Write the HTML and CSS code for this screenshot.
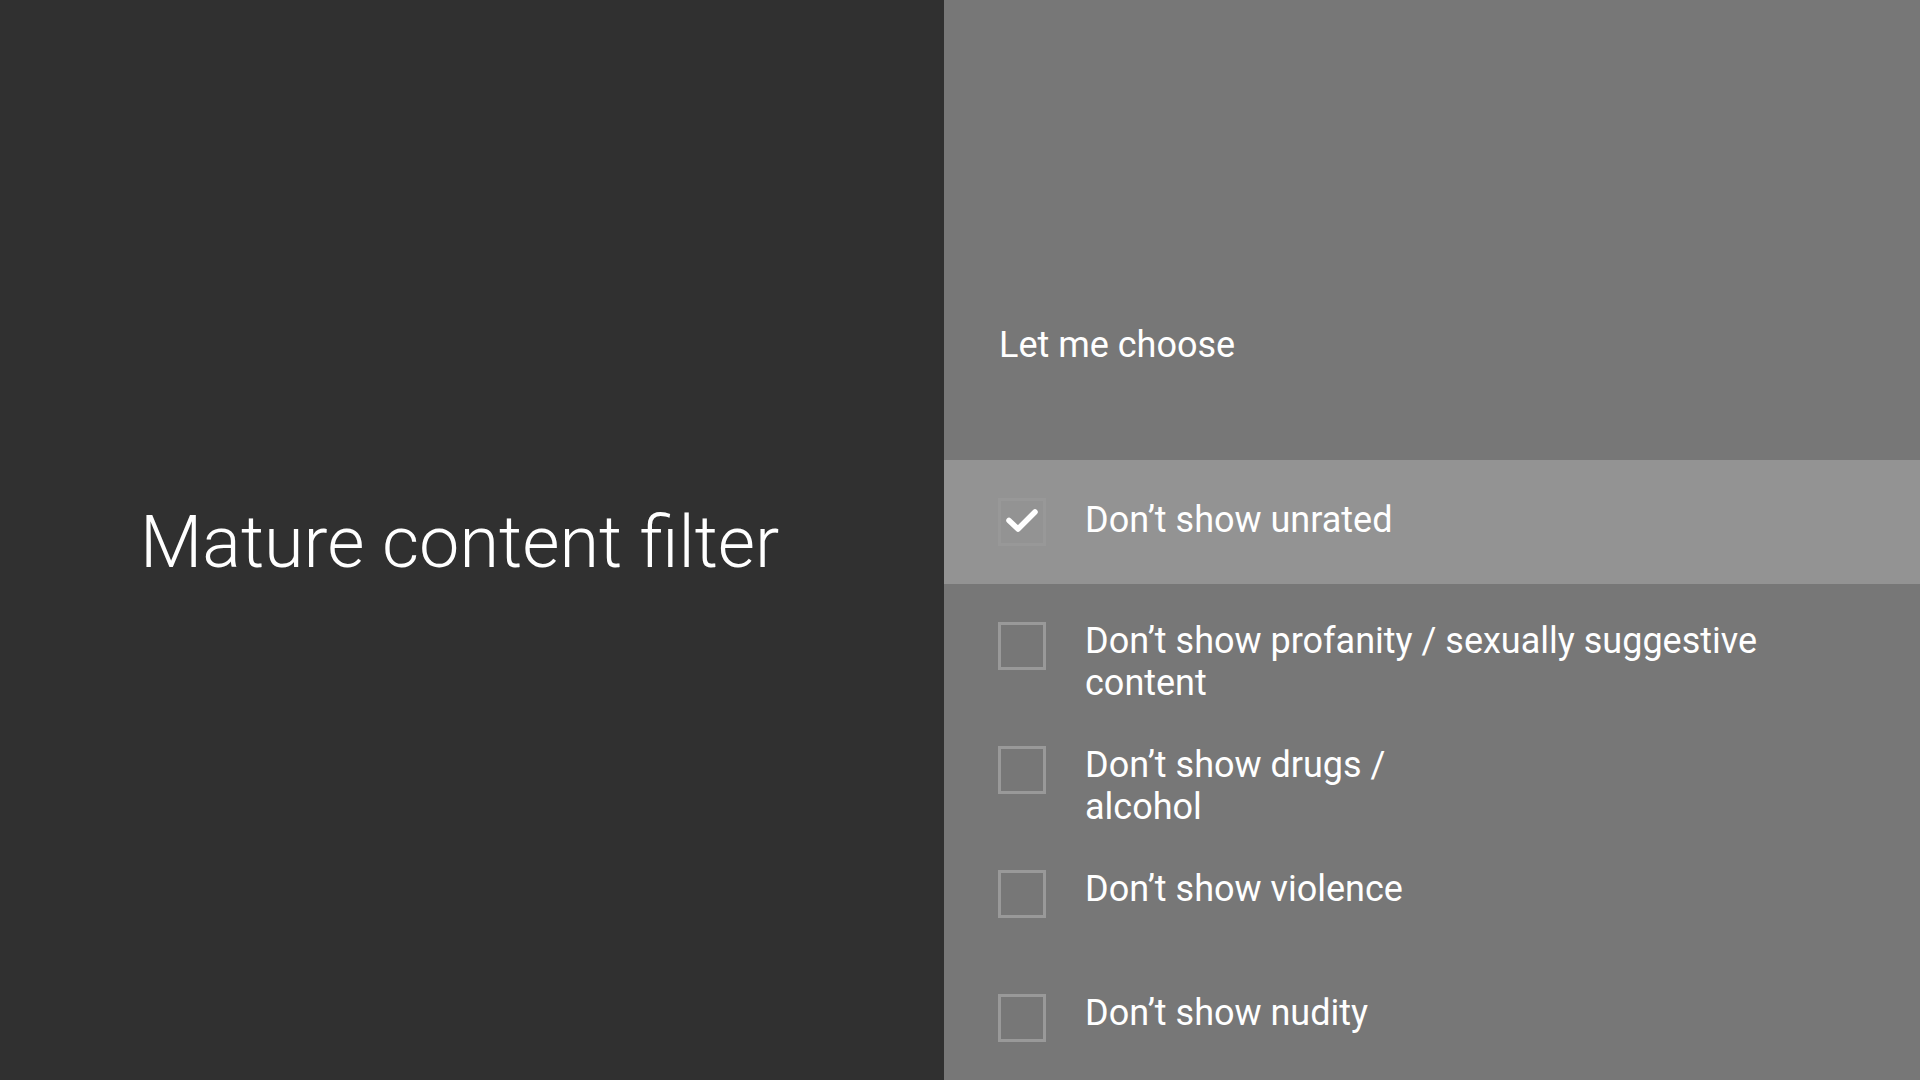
FILE: index.html
```html
<!DOCTYPE html>
<html lang="en">
<head>
    <meta charset="utf-8">
    <title>Mature content filter</title>
    <link rel="stylesheet" href="styles.css">
</head>
<body>
    <section class="intro">
        <h1>Mature content filter</h1>
    </section>

    <section class="options">
        <header class="options-head">Let me choose</header>

        <div class="option selected">
            <span class="box">
                <svg viewBox="0 0 48 48" width="48" height="48">
                    <polyline points="11,22.5 20,31 37,14" fill="none" stroke="#ffffff" stroke-width="5.5" stroke-linecap="round" stroke-linejoin="round"/>
                </svg>
            </span>
            <p class="label">Don’t show unrated</p>
        </div>
        <div class="option">
            <span class="box"></span>
            <p class="label">Don’t show profanity / sexually suggestive<br>content</p>
        </div>
        <div class="option">
            <span class="box"></span>
            <p class="label">Don’t show drugs /<br>alcohol</p>
        </div>
        <div class="option">
            <span class="box"></span>
            <p class="label">Don’t show violence</p>
        </div>
        <div class="option">
            <span class="box"></span>
            <p class="label">Don’t show nudity</p>
        </div>
    </section>
</body>
</html>
```

FILE: styles.css
```css
* {
    box-sizing: border-box;
}

body {
    margin: 0;
    height: 1080px;
    display: flex;
    font-family: Roboto, 'Noto Sans', sans-serif;
    color: #ffffff;
    overflow: hidden;
}

.intro {
    width: 944px;
    flex: none;
    background-color: #303030;
    display: flex;
    align-items: center;
    padding-left: 140px;
}

h1 {
    margin: 0;
    font-size: 72px;
    font-weight: 300;
    line-height: normal;
    position: relative;
    top: 2px;
}

.options {
    flex: 1;
    background-color: #777777;
}

.options-head {
    height: 460px;
    display: flex;
    align-items: flex-end;
    padding: 0 0 94px 55px;
    font-size: 36px;
}

.option {
    height: 124px;
    display: flex;
    align-items: flex-start;
    padding: 36px 54px 0 54px;
}

.option.selected {
    background-color: #939393;
}

.box {
    width: 48px;
    height: 48px;
    flex: none;
    margin-top: 2px;
    margin-right: 39px;
    border: 3px solid #999999;
    position: relative;
}

.selected .box {
    border-color: #989898;
}

.box svg {
    position: absolute;
    left: -3px;
    top: -3px;
}

.label {
    margin: 0;
    font-size: 36px;
    line-height: normal;
}

.selected .label {
    margin-top: 3px;
}
```
